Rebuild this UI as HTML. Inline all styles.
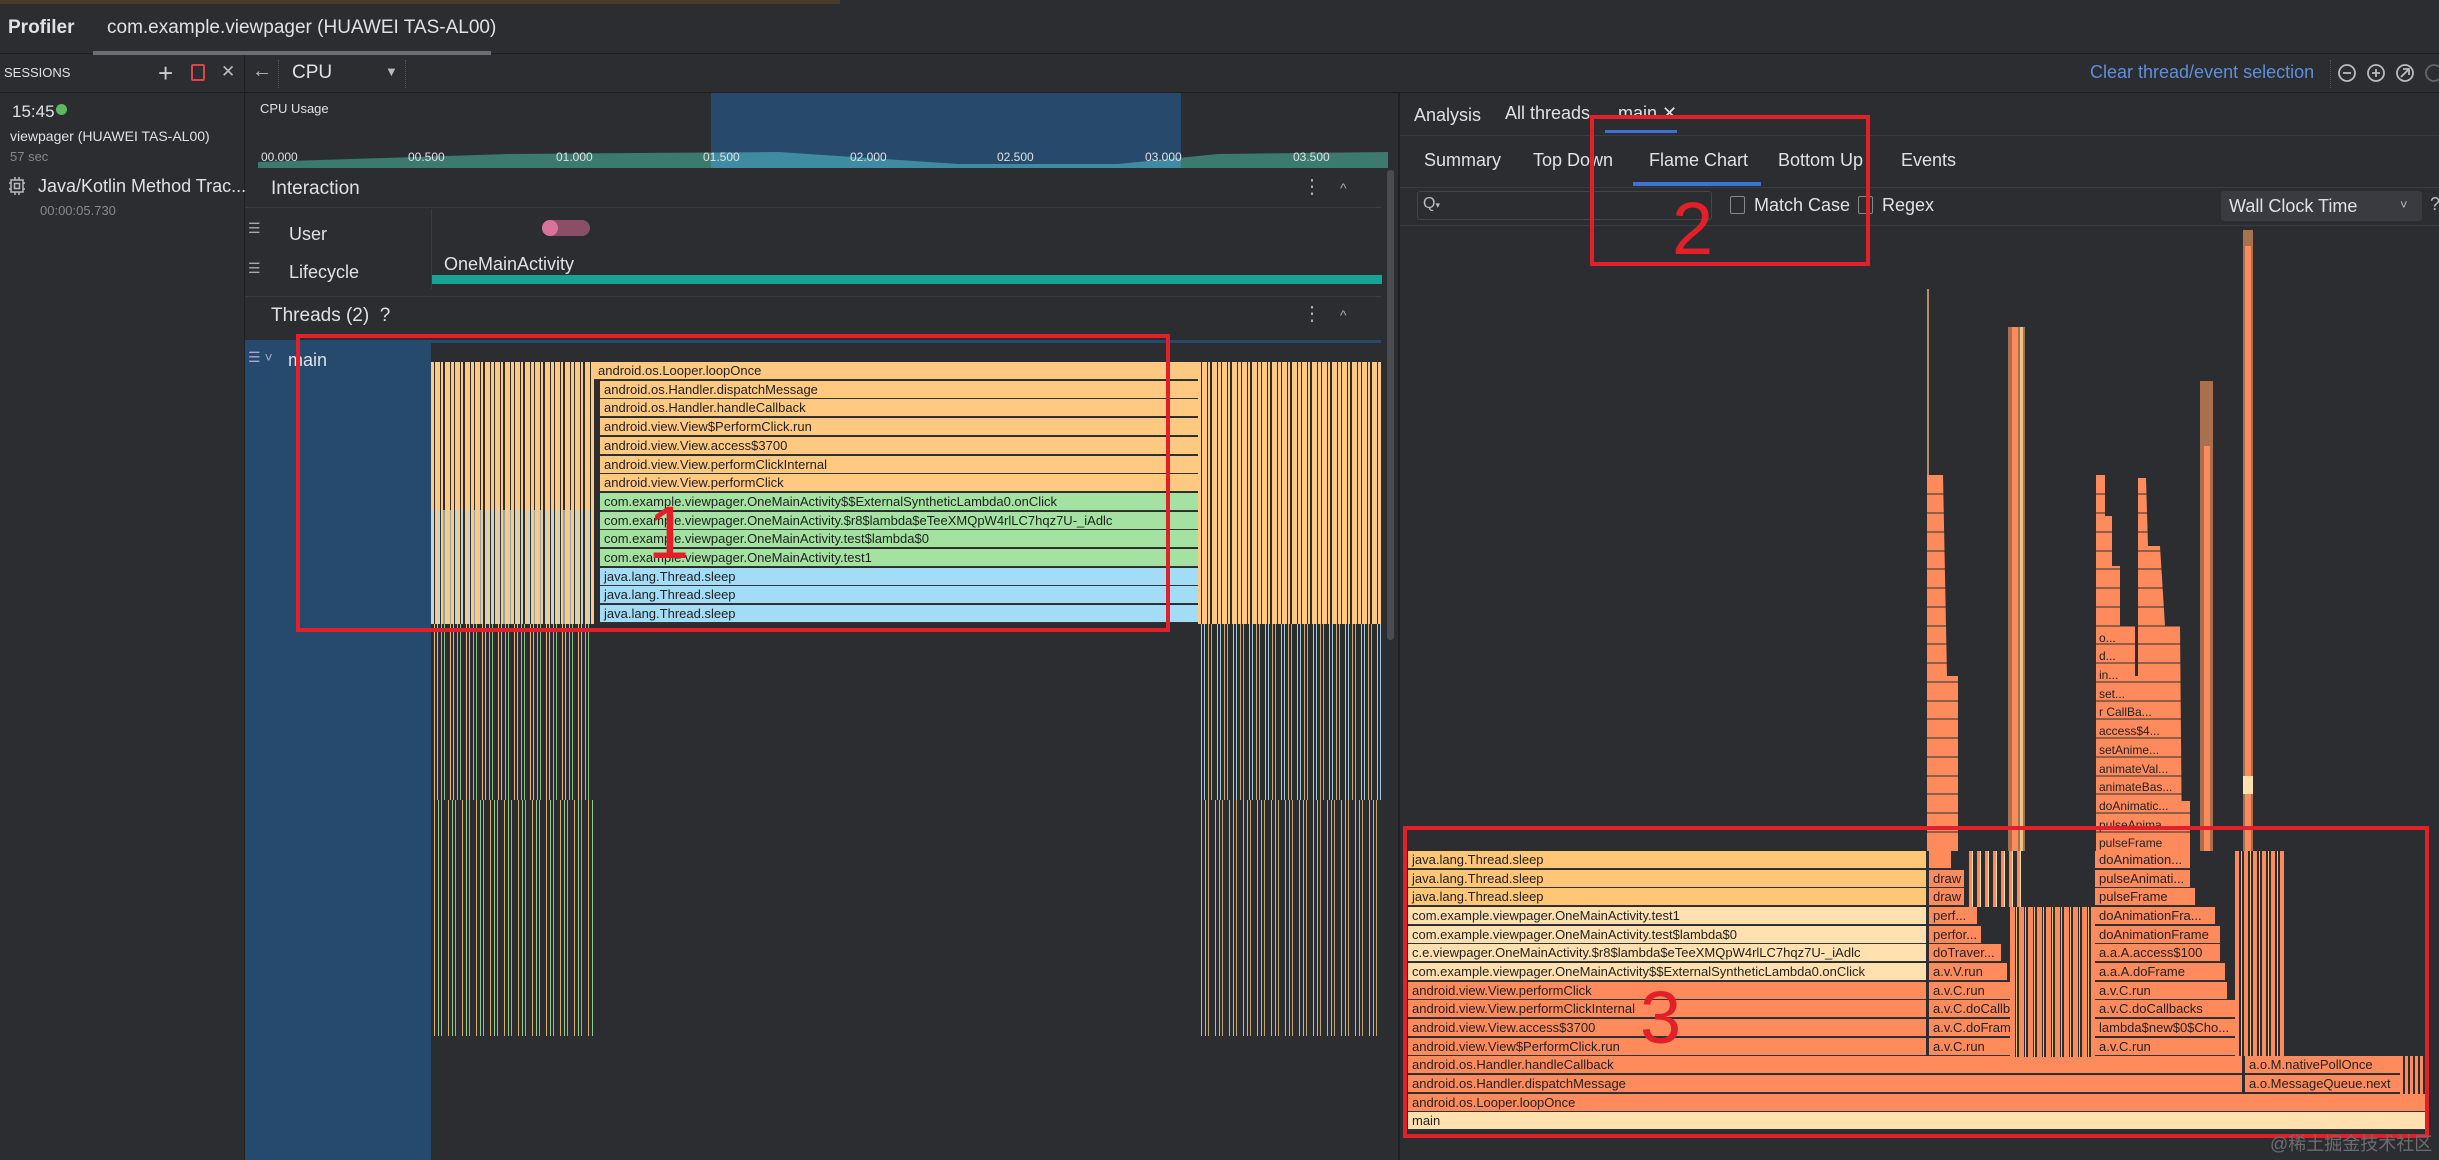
<!DOCTYPE html>
<html><head><meta charset="utf-8">
<style>
*{margin:0;padding:0;box-sizing:border-box}
body{width:2439px;height:1160px;overflow:hidden;background:#2b2d30;font-family:"Liberation Sans",sans-serif;color:#dfe1e5;position:relative}
.a{position:absolute}
.t{position:absolute;white-space:nowrap}
.row{position:absolute;height:18px;font-size:13px;line-height:18px;color:#222;padding-left:4px;overflow:hidden;white-space:nowrap;border-bottom:1px solid #333}
.or{background:#ffc981}.gr{background:#a3e2a0}.bl{background:#a3dcf7}.cr{background:#ffe0ae}.sa{background:#ff8b5c}.so{background:#ffc676}
.red{position:absolute;border:4px solid #e3202a}
.num{position:absolute;color:#e3202a;font-size:74px;font-family:"Liberation Sans",sans-serif}
.stripeL{background:repeating-linear-gradient(90deg,#ffc981 0 3px,#2b2d30 3px 4px,#ffc981 4px 9px,#2b2d30 9px 10px,#ffc981 10px 12px,#2b2d30 12px 14px,#ffc981 14px 19px,#2b2d30 19px 20px)}
.stripeD{background:repeating-linear-gradient(90deg,#2b2d30 0 3px,#ffc981 3px 4px,#2b2d30 4px 6px,#a3dcf7 6px 7px,#2b2d30 7px 10px,#e9b36b 10px 11px,#2b2d30 11px 13px,#8fcf92 13px 14px,#2b2d30 14px 16px)}
.stripeG{background:repeating-linear-gradient(90deg,#2b2d30 0 3px,#d9b071 3px 4px,#2b2d30 4px 7px,#8fcf92 7px 8px,#2b2d30 8px 10px,#c5a56c 10px 11px,#2b2d30 11px 14px)}
</style></head><body>
<!-- top strip -->
<div class="a" style="left:0;top:0;width:840px;height:4px;background:#4a3a28"></div>
<div class="a" style="left:0;top:4px;width:2439px;height:50px;background:#2b2d30;border-bottom:1px solid #1e1f22"></div>
<div class="t" style="left:8px;top:17px;font-size:19px;font-weight:bold">Profiler</div>
<div class="t" style="left:107px;top:17px;font-size:19px">com.example.viewpager (HUAWEI TAS-AL00)</div>
<div class="a" style="left:93px;top:51px;width:398px;height:4px;background:#6b6e75"></div>
<!-- toolbar -->
<div class="a" style="left:0;top:55px;width:2439px;height:38px;border-bottom:1px solid #1e1f22"></div>
<div class="t" style="left:4px;top:65px;font-size:13px">SESSIONS</div>
<div class="t" style="left:158px;top:58px;font-size:26px;color:#ccc">+</div>
<div class="a" style="left:191px;top:64px;width:14px;height:17px;border:2px solid #d44;border-radius:2px"></div>
<div class="t" style="left:221px;top:62px;font-size:17px;color:#bbb">✕</div>
<div class="a" style="left:244px;top:55px;width:1px;height:1105px;background:#1e1f22"></div>
<div class="t" style="left:252px;top:60px;font-size:20px;color:#bbb">←</div>
<div class="a" style="left:278px;top:60px;width:1px;height:28px;border-left:1px dotted #555"></div>
<div class="t" style="left:292px;top:62px;font-size:19px">CPU</div>
<div class="t" style="left:385px;top:64px;font-size:13px;color:#bbb">▼</div>
<div class="a" style="left:405px;top:60px;width:1px;height:28px;border-left:1px dotted #555"></div>
<div class="t" style="left:2090px;top:62px;font-size:18px;color:#5e8fdb">Clear thread/event selection</div>
<div class="a" style="left:2330px;top:60px;width:1px;height:28px;border-left:1px dotted #555"></div>
<svg class="a" style="left:2337px;top:62px" width="102" height="22"><g fill="none" stroke="#bbb" stroke-width="1.8"><circle cx="10" cy="11" r="8"/><path d="M6 11h8"/><circle cx="39" cy="11" r="8"/><path d="M35 11h8M39 7v8"/><circle cx="68" cy="11" r="8"/><path d="M64 15l8-8M66 7h6v6"/><circle cx="97" cy="11" r="8" stroke="#666"/></g></svg>
<!-- sessions -->
<div class="t" style="left:12px;top:102px;font-size:17px">15:45</div>
<div class="a" style="left:56px;top:104px;width:11px;height:11px;border-radius:50%;background:#5fb85f"></div>
<div class="t" style="left:10px;top:128px;font-size:14px">viewpager (HUAWEI TAS-AL00)</div>
<div class="t" style="left:10px;top:149px;font-size:13px;color:#888">57 sec</div>
<svg class="a" style="left:8px;top:176px" width="18" height="20"><g fill="none" stroke="#bbb" stroke-width="1.5"><rect x="3" y="4" width="12" height="12"/><rect x="6.5" y="7.5" width="5" height="5"/><path d="M1 7h2M1 13h2M15 7h2M15 13h2M7 1v3M11 1v3M7 16v3M11 16v3"/></g></svg>
<div class="t" style="left:38px;top:176px;font-size:18px">Java/Kotlin Method Trac...</div>
<div class="t" style="left:40px;top:203px;font-size:13px;color:#888">00:00:05.730</div>
<!-- CPU usage -->
<div class="a" style="left:245px;top:93px;width:1143px;height:75px;background:#2b2d30"></div>
<div class="a" style="left:711px;top:93px;width:470px;height:75px;background:#27496b"></div>
<div class="t" style="left:260px;top:101px;font-size:13px">CPU Usage</div>
<svg class="a" style="left:258px;top:148px" width="1130" height="20"><path d="M0 20 L0 14 L250 6 L520 4 L700 16 L860 16 L960 6 L1130 4 L1130 20Z" fill="#3d7a6e"/><path d="M453 20 L453 5 L520 4 L700 16 L860 16 L923 10 L923 20Z" fill="#3f8ca2"/></svg>
<div style="font-size:12px">
<div class="t" style="left:261px;top:150px">00.000</div><div class="t" style="left:408px;top:150px">00.500</div><div class="t" style="left:556px;top:150px">01.000</div><div class="t" style="left:703px;top:150px">01.500</div><div class="t" style="left:850px;top:150px">02.000</div><div class="t" style="left:997px;top:150px">02.500</div><div class="t" style="left:1145px;top:150px">03.000</div><div class="t" style="left:1293px;top:150px">03.500</div>
</div>
<!-- Interaction -->
<div class="a" style="left:245px;top:168px;width:1136px;height:40px;border-bottom:1px solid #3a3c40"></div>
<div class="t" style="left:271px;top:178px;font-size:19px">Interaction</div>
<div class="t" style="left:1302px;top:174px;font-size:20px;color:#aaa">⋮</div>
<div class="t" style="left:1340px;top:180px;font-size:14px;color:#aaa">^</div>
<div class="a" style="left:431px;top:209px;width:1px;height:80px;background:#3a3c40"></div>
<div class="t" style="left:248px;top:220px;font-size:14px;color:#aaa">☰</div>
<div class="t" style="left:289px;top:224px;font-size:18px">User</div>
<div class="a" style="left:542px;top:220px;width:48px;height:16px;border-radius:8px;background:#8a4f64"></div>
<div class="a" style="left:542px;top:220px;width:16px;height:16px;border-radius:8px;background:#d9739c"></div>
<div class="t" style="left:248px;top:260px;font-size:14px;color:#aaa">☰</div>
<div class="t" style="left:289px;top:262px;font-size:18px">Lifecycle</div>
<div class="t" style="left:444px;top:254px;font-size:18px">OneMainActivity</div>
<div class="a" style="left:432px;top:275px;width:950px;height:9px;background:#16a595"></div>
<!-- Threads -->
<div class="a" style="left:245px;top:296px;width:1136px;height:40px;border-top:1px solid #3a3c40"></div>
<div class="t" style="left:271px;top:305px;font-size:19px">Threads (2)&nbsp; ?</div>
<div class="t" style="left:1302px;top:301px;font-size:20px;color:#aaa">⋮</div>
<div class="t" style="left:1340px;top:307px;font-size:14px;color:#aaa">^</div>
<div class="a" style="left:245px;top:340px;width:1136px;height:3px;background:#27496b"></div>
<div class="a" style="left:245px;top:343px;width:186px;height:817px;background:#264a6d"></div>
<div class="t" style="left:248px;top:349px;font-size:14px;color:#aac">☰ ˅</div>
<div class="t" style="left:288px;top:350px;font-size:18px">main</div>
<!-- left flame -->
<div class="a stripeD" style="left:431px;top:624px;width:163px;height:412px;opacity:.9"></div>
<div class="a stripeG" style="left:431px;top:800px;width:163px;height:236px"></div>
<div class="a stripeD" style="left:1198px;top:624px;width:183px;height:412px;opacity:.9"></div>
<div class="a stripeG" style="left:1198px;top:800px;width:183px;height:236px"></div>
<div class="a stripeL" style="left:431px;top:362px;width:163px;height:262px"></div>
<div class="a stripeL" style="left:1198px;top:362px;width:183px;height:262px"></div>
<div class="a" style="left:431px;top:510px;width:163px;height:114px;background:repeating-linear-gradient(90deg,rgba(163,220,247,.7) 0 2px,transparent 2px 6px)"></div>
<div class="row or" style="left:594px;top:362px;width:604px">android.os.Looper.loopOnce</div>
<div class="row or" style="left:600px;top:381px;width:598px">android.os.Handler.dispatchMessage</div>
<div class="row or" style="left:600px;top:399px;width:598px">android.os.Handler.handleCallback</div>
<div class="row or" style="left:600px;top:418px;width:598px">android.view.View$PerformClick.run</div>
<div class="row or" style="left:600px;top:437px;width:598px">android.view.View.access$3700</div>
<div class="row or" style="left:600px;top:456px;width:598px">android.view.View.performClickInternal</div>
<div class="row or" style="left:600px;top:474px;width:598px">android.view.View.performClick</div>
<div class="row gr" style="left:600px;top:493px;width:598px">com.example.viewpager.OneMainActivity$$ExternalSyntheticLambda0.onClick</div>
<div class="row gr" style="left:600px;top:512px;width:598px">com.example.viewpager.OneMainActivity.$r8$lambda$eTeeXMQpW4rlLC7hqz7U-_iAdlc</div>
<div class="row gr" style="left:600px;top:530px;width:598px">com.example.viewpager.OneMainActivity.test$lambda$0</div>
<div class="row gr" style="left:600px;top:549px;width:598px">com.example.viewpager.OneMainActivity.test1</div>
<div class="row bl" style="left:600px;top:568px;width:598px">java.lang.Thread.sleep</div>
<div class="row bl" style="left:600px;top:586px;width:598px">java.lang.Thread.sleep</div>
<div class="row bl" style="left:600px;top:605px;width:598px">java.lang.Thread.sleep</div>
<!-- scrollbar -->
<div class="a" style="left:1387px;top:170px;width:7px;height:470px;background:#4a4c50;border-radius:3px"></div>
<div class="a" style="left:1398px;top:93px;width:2px;height:1067px;background:#1e1f22"></div>
<!-- right panel -->
<div class="t" style="left:1414px;top:105px;font-size:18px">Analysis</div>
<div class="t" style="left:1505px;top:103px;font-size:18px">All threads</div>
<div class="t" style="left:1618px;top:103px;font-size:18px">main ✕</div>
<div class="a" style="left:1605px;top:130px;width:72px;height:3px;background:#3b73d8"></div>
<div class="a" style="left:1400px;top:135px;width:1039px;height:1px;background:#3a3c40"></div>
<div class="t" style="left:1424px;top:150px;font-size:18px">Summary</div>
<div class="t" style="left:1533px;top:150px;font-size:18px">Top Down</div>
<div class="t" style="left:1649px;top:150px;font-size:18px">Flame Chart</div>
<div class="t" style="left:1778px;top:150px;font-size:18px">Bottom Up</div>
<div class="t" style="left:1901px;top:150px;font-size:18px">Events</div>
<div class="a" style="left:1633px;top:182px;width:128px;height:4px;background:#3b73d8"></div>
<div class="a" style="left:1400px;top:187px;width:1039px;height:1px;background:#3a3c40"></div>
<div class="a" style="left:1417px;top:191px;width:295px;height:29px;border:1px solid #43454a;border-radius:3px;background:#2b2d30"></div>
<div class="t" style="left:1423px;top:195px;font-size:16px;color:#bbb">Q<span style="font-size:9px">▾</span></div>
<div class="a" style="left:1730px;top:196px;width:15px;height:18px;border:1px solid #888;border-radius:2px"></div>
<div class="t" style="left:1754px;top:195px;font-size:18px">Match Case</div>
<div class="a" style="left:1858px;top:196px;width:15px;height:18px;border:1px solid #888;border-radius:2px"></div>
<div class="t" style="left:1882px;top:195px;font-size:18px">Regex</div>
<div class="a" style="left:2221px;top:191px;width:201px;height:30px;background:#393b40;border-radius:3px"></div>
<div class="t" style="left:2229px;top:196px;font-size:18px">Wall Clock Time</div>
<div class="t" style="left:2400px;top:197px;font-size:13px;color:#bbb">˅</div>
<div class="t" style="left:2430px;top:194px;font-size:18px;color:#bbb">?</div>
<div class="a" style="left:1400px;top:225px;width:1039px;height:1px;background:#3a3c40"></div>
<!-- right flame spikes -->
<svg class="a" style="left:1400px;top:226px" width="1039" height="625">
<g fill="#ff8b5c">
<rect x="527" y="63" width="2" height="186" fill="#b58d6a"/>
<polygon points="527,249 543,249 547,450 558,450 558,625 527,625"/>
<rect x="608" y="101" width="17" height="524" fill="#a8704e"/>
<rect x="612" y="101" width="6" height="524" fill="#ff8b5c"/>
<rect x="620" y="101" width="3" height="524" fill="#e8c48a"/>
<polygon points="696,249 705,249 705,290 712,290 712,340 720,340 720,400 735,400 735,450 748,450 748,520 760,520 770,520 775,575 790,575 790,625 696,625"/>
<polygon points="738,252 746,252 748,320 760,320 765,400 780,400 782,625 738,625"/>
<rect x="800" y="155" width="13" height="470" fill="#a8704e"/>
<rect x="804" y="220" width="6" height="405"/>
<rect x="843" y="4" width="10" height="621" fill="#a8704e"/>
<rect x="845" y="20" width="6" height="605"/>
<rect x="843" y="550" width="10" height="18" fill="#ffe0ae"/>
</g>
<g stroke="#2b2d30" stroke-width="1">
<path d="M527 268H560M527 287H560M527 306H560M527 325H560M527 343H560M527 362H560M527 381H560M527 400H560M527 418H560M527 437H560M527 456H560M527 475H560M527 493H560M527 512H560M527 531H560M527 550H560M527 568H560M527 587H560M527 606H560"/>
<path d="M696 268H800M696 287H800M696 306H800M696 325H800M696 343H800M696 362H800M696 381H800M696 400H800M696 418H800M696 437H800M696 456H800M696 475H800M696 493H800M696 512H800M696 531H800M696 550H800M696 568H800M696 587H800M696 606H800"/>
</g>
<g font-size="12" fill="#222" font-family="Liberation Sans">
<text x="699" y="416">o...</text><text x="699" y="434">d...</text><text x="699" y="453">in...</text><text x="699" y="472">set...</text><text x="699" y="490">r CallBa...</text><text x="699" y="509">access$4...</text><text x="699" y="528">setAnime...</text><text x="699" y="547">animateVal...</text><text x="699" y="565">animateBas...</text><text x="699" y="584">doAnimatic...</text><text x="699" y="603">pulseAnima...</text><text x="699" y="621">pulseFrame</text>
</g>
</svg>
<!-- right flame bottom rows -->
<div class="row so" style="left:1408px;top:851px;width:518px">java.lang.Thread.sleep</div>
<div class="row so" style="left:1408px;top:870px;width:518px">java.lang.Thread.sleep</div>
<div class="row so" style="left:1408px;top:888px;width:518px">java.lang.Thread.sleep</div>
<div class="row cr" style="left:1408px;top:907px;width:518px">com.example.viewpager.OneMainActivity.test1</div>
<div class="row cr" style="left:1408px;top:926px;width:518px">com.example.viewpager.OneMainActivity.test$lambda$0</div>
<div class="row cr" style="left:1408px;top:944px;width:518px">c.e.viewpager.OneMainActivity.$r8$lambda$eTeeXMQpW4rlLC7hqz7U-_iAdlc</div>
<div class="row cr" style="left:1408px;top:963px;width:518px">com.example.viewpager.OneMainActivity$$ExternalSyntheticLambda0.onClick</div>
<div class="row sa" style="left:1408px;top:982px;width:518px">android.view.View.performClick</div>
<div class="row sa" style="left:1408px;top:1000px;width:518px">android.view.View.performClickInternal</div>
<div class="row sa" style="left:1408px;top:1019px;width:518px">android.view.View.access$3700</div>
<div class="row sa" style="left:1408px;top:1038px;width:518px">android.view.View$PerformClick.run</div>
<div class="row sa" style="left:1408px;top:1056px;width:834px">android.os.Handler.handleCallback</div>
<div class="row sa" style="left:1408px;top:1075px;width:834px">android.os.Handler.dispatchMessage</div>
<div class="row sa" style="left:1408px;top:1094px;width:1019px">android.os.Looper.loopOnce</div>
<div class="row cr" style="left:1408px;top:1112px;width:1019px">main</div>
<!-- col B -->
<div class="row sa" style="left:1929px;top:851px;width:22px"></div>
<div class="row sa" style="left:1929px;top:870px;width:35px">draw</div>
<div class="row sa" style="left:1929px;top:888px;width:35px">draw</div>
<div class="row sa" style="left:1929px;top:907px;width:48px">perf...</div>
<div class="row sa" style="left:1929px;top:926px;width:52px">perfor...</div>
<div class="row sa" style="left:1929px;top:944px;width:72px">doTraver...</div>
<div class="row sa" style="left:1929px;top:963px;width:78px">a.v.V.run</div>
<div class="row sa" style="left:1929px;top:982px;width:108px">a.v.C.run</div>
<div class="row sa" style="left:1929px;top:1000px;width:122px">a.v.C.doCallbacks</div>
<div class="row sa" style="left:1929px;top:1019px;width:164px">a.v.C.doFrame</div>
<div class="row sa" style="left:1929px;top:1038px;width:164px">a.v.C.run</div>
<div class="a" style="left:1965px;top:851px;width:60px;height:56px;background:repeating-linear-gradient(90deg,#2b2d30 0 4px,#ff8b5c 4px 7px,#ffe0ae 7px 8px)"></div>
<div class="a" style="left:2010px;top:907px;width:85px;height:150px;background:repeating-linear-gradient(90deg,#ff8b5c 0 5px,#2b2d30 5px 6px,#e8c06a 6px 7px,#2b2d30 7px 9px)"></div>
<!-- col C -->
<div class="row sa" style="left:2095px;top:851px;width:95px">doAnimation...</div>
<div class="row sa" style="left:2095px;top:870px;width:95px">pulseAnimati...</div>
<div class="row sa" style="left:2095px;top:888px;width:100px">pulseFrame</div>
<div class="row sa" style="left:2095px;top:907px;width:120px">doAnimationFra...</div>
<div class="row sa" style="left:2095px;top:926px;width:125px">doAnimationFrame</div>
<div class="row sa" style="left:2095px;top:944px;width:125px">a.a.A.access$100</div>
<div class="row sa" style="left:2095px;top:963px;width:130px">a.a.A.doFrame</div>
<div class="row sa" style="left:2095px;top:982px;width:132px">a.v.C.run</div>
<div class="row sa" style="left:2095px;top:1000px;width:140px">a.v.C.doCallbacks</div>
<div class="row sa" style="left:2095px;top:1019px;width:145px">lambda$new$0$Cho...</div>
<div class="row sa" style="left:2095px;top:1038px;width:145px">a.v.C.run</div>
<div class="row sa" style="left:2245px;top:1056px;width:155px">a.o.M.nativePollOnce</div>
<div class="row sa" style="left:2245px;top:1075px;width:155px">a.o.MessageQueue.next</div>
<div class="a" style="left:2235px;top:851px;width:50px;height:205px;background:repeating-linear-gradient(90deg,#ff8b5c 0 4px,#2b2d30 4px 6px,#f5c068 6px 7px,#2b2d30 7px 9px)"></div>
<div class="a" style="left:2400px;top:1056px;width:27px;height:38px;background:repeating-linear-gradient(90deg,#ff8b5c 0 3px,#2b2d30 3px 5px)"></div>
<!-- annotations -->
<div class="red" style="left:296px;top:334px;width:874px;height:298px"></div>
<div class="num" style="left:648px;top:490px">1</div>
<div class="red" style="left:1590px;top:115px;width:280px;height:151px"></div>
<div class="num" style="left:1672px;top:186px">2</div>
<div class="red" style="left:1403px;top:826px;width:1026px;height:312px"></div>
<div class="num" style="left:1640px;top:975px">3</div>
<div class="t" style="left:2270px;top:1130px;font-size:18px;color:#6b6d70;font-family:'Liberation Sans','Noto Sans CJK SC',sans-serif">@稀土掘金技术社区</div>
</body></html>
